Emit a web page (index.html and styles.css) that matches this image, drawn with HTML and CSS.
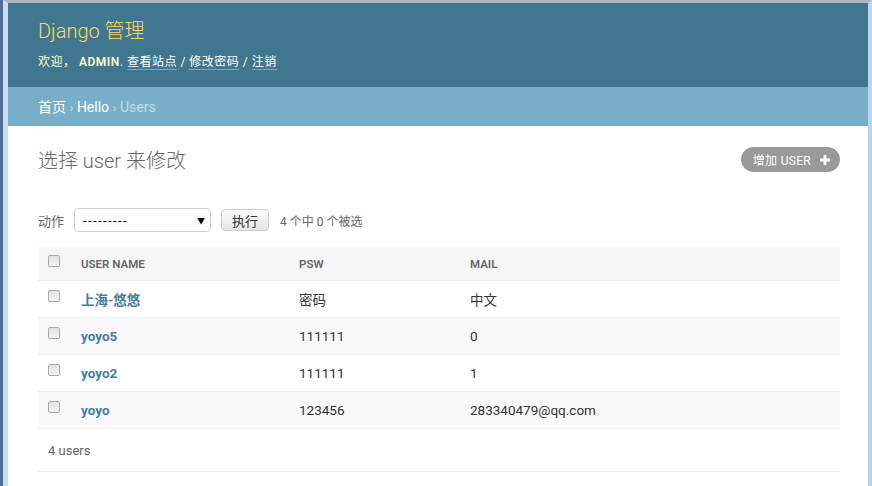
FILE: index.html
```html
<!DOCTYPE html>
<html lang="zh">
<head>
<meta charset="utf-8">
<title>选择 user 来修改 | Django 站点管理员</title>
<link rel="stylesheet" href="styles.css">
</head>
<body>
<div class="page">
  <header class="header">
    <h1 class="branding">Django 管理</h1>
    <div class="user-tools">
      欢迎， <strong>ADMIN</strong>. <a href="#">查看站点</a> / <a href="#">修改密码</a> / <a href="#">注销</a>
    </div>
  </header>
  <nav class="breadcrumbs">
    <a href="#">首页</a> <span class="sep">›</span> <a href="#">Hello</a> <span class="sep">›</span> Users
  </nav>
  <main class="content">
    <div class="title-row">
      <h2 class="title">选择 user 来修改</h2>
      <a class="addlink" href="#">增加 USER
        <svg class="plus" width="10" height="10" viewBox="0 0 10 10"><path d="M3.6 0h2.8v3.6H10v2.8H6.4V10H3.6V6.4H0V3.6h3.6z" fill="#fff"/></svg>
      </a>
    </div>
    <div class="actions">
      <label class="action-label">动作</label>
      <div class="select"><span class="dashes">---------</span><span class="arrow">▼</span></div>
      <button class="go">执行</button>
      <span class="counter">4 个中 0 个被选</span>
    </div>
    <table class="result">
      <colgroup>
        <col class="c-check"><col class="c-name"><col class="c-psw"><col>
      </colgroup>
      <thead>
        <tr>
          <th><span class="cb"></span></th>
          <th>User name</th>
          <th>Psw</th>
          <th>Mail</th>
        </tr>
      </thead>
      <tbody>
        <tr class="row1"><td><span class="cb"></span></td><td><a href="#">上海-悠悠</a></td><td>密码</td><td>中文</td></tr>
        <tr class="row2"><td><span class="cb"></span></td><td><a href="#">yoyo5</a></td><td>111111</td><td>0</td></tr>
        <tr class="row1"><td><span class="cb"></span></td><td><a href="#">yoyo2</a></td><td>111111</td><td>1</td></tr>
        <tr class="row2"><td><span class="cb"></span></td><td><a href="#">yoyo</a></td><td>123456</td><td>283340479@qq.com</td></tr>
      </tbody>
    </table>
    <p class="paginator">4 users</p>
  </main>
</div>
</body>
</html>
```
FILE: styles.css
```css
html {
  margin: 0;
  background: #4e6f95;
  padding-left: 3px;
}
body {
  margin: 0;
  border-left: 5px solid #c6dcf2;
  border-right: 4px solid #bcd3ec;
  border-top: 3px solid #b0b6bd;
  min-height: calc(100vh - 3px);
  background: #fff;
  font-family: Roboto, "Noto Sans CJK SC", "Lucida Grande", Verdana, sans-serif;
  color: #333;
  font-size: 13px;
}
.page {
  min-height: calc(100vh - 3px);
  background: #fff;
}
a { text-decoration: none; }

.header {
  background: #417690;
  padding: 16px 30px 17px;
}
.branding {
  margin: 0;
  font-size: 20px;
  line-height: 24px;
  font-weight: 300;
  color: #f5dd5d;
}
.user-tools {
  margin-top: 11px;
  font-size: 12px;
  line-height: 16px;
  color: #ffc;
  letter-spacing: 0.5px;
}
.user-tools strong {
  font-weight: 600;
}
.user-tools a {
  color: #fff;
  border-bottom: 1px solid rgba(255,255,255,0.35);
}

.breadcrumbs {
  background: #79aec8;
  padding: 12px 30px 10px;
  line-height: 17px;
  font-size: 14px;
  color: #c4dce8;
}
.breadcrumbs a { color: #fff; }
.breadcrumbs .sep { font-size: 13px; }

.content {
  padding: 23px 28px 0 30px;
}
.title-row {
  display: flex;
  justify-content: space-between;
  align-items: center;
}
.title {
  margin: 0;
  font-size: 20px;
  line-height: 24px;
  font-weight: 300;
  color: #666;
}
.addlink {
  display: flex;
  align-items: center;
  gap: 9px;
  background: #999;
  color: #fff;
  border-radius: 15px;
  height: 25px;
  padding: 0 10px 0 12px;
  font-size: 12px;
  letter-spacing: 0.3px;
  margin-top: -3px;
}
.plus { display: block; }

.actions {
  display: flex;
  align-items: center;
  margin-top: 35px;
  height: 24px;
  font-size: 13px;
  color: #666;
}
.action-label { margin-right: 10px; }
.select {
  box-sizing: border-box;
  width: 137px;
  height: 24px;
  border: 1px solid #ccc;
  border-radius: 4px;
  display: flex;
  align-items: center;
  justify-content: space-between;
  padding: 0 5px 0 8px;
  color: #000;
  font-size: 13px;
  background: #fff;
}
.dashes { letter-spacing: 1.4px; }
.arrow { font-size: 8px; }
.go {
  margin-left: 10px;
  height: 22px;
  width: 48px;
  border: 1px solid #ccc;
  border-radius: 4px;
  background: linear-gradient(#fafafa, #e6e6e6);
  font-family: inherit;
  font-size: 13px;
  color: #333;
  padding: 0;
}
.counter {
  margin-left: 11px;
  font-size: 12px;
  color: #666;
}

.result {
  margin-top: 15px;
  width: 100%;
  border-collapse: collapse;
}
.c-check { width: 35px; }
.c-name { width: 218px; }
.c-psw { width: 171px; }
.result th {
  background: #f6f6f6;
  text-align: left;
  font-size: 11.5px;
  font-weight: 600;
  text-transform: uppercase;
  color: #666;
  height: 33px;
  padding: 0 8px;
  border-bottom: 1px solid #eee;
  vertical-align: middle;
}
.result td {
  height: 36px;
  padding: 0 8px;
  border-bottom: 1px solid #eee;
  font-size: 13.5px;
  color: #333;
  vertical-align: middle;
}
.result th:first-child, .result td:first-child { padding-left: 10px; }
.result td a {
  color: #447e9b;
  font-weight: 700;
}
.row2 td { background: #f9f9f9; }
.cb {
  display: block;
  box-sizing: border-box;
  width: 12px;
  height: 12px;
  border: 1px solid #a9a9a9;
  border-radius: 2px;
  background: linear-gradient(#e2e2e2, #f6f6f6);
  margin-top: -6px;
}
.paginator {
  margin: 0;
  height: 42px;
  line-height: 43px;
  padding: 0 10px;
  border-bottom: 1px solid #eee;
  font-size: 13px;
  color: #666;
}
```
